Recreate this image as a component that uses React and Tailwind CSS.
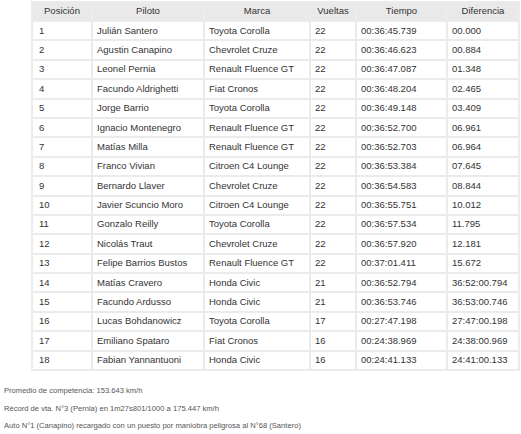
const rows = [
    ["1", "Julián Santero", "Toyota Corolla", "22", "00:36:45.739", "00.000"],
    ["2", "Agustin Canapino", "Chevrolet Cruze", "22", "00:36:46.623", "00.884"],
    ["3", "Leonel Pernia", "Renault Fluence GT", "22", "00:36:47.087", "01.348"],
    ["4", "Facundo Aldrighetti", "Fiat Cronos", "22", "00:36:48.204", "02.465"],
    ["5", "Jorge Barrio", "Toyota Corolla", "22", "00:36:49.148", "03.409"],
    ["6", "Ignacio Montenegro", "Renault Fluence GT", "22", "00:36:52.700", "06.961"],
    ["7", "Matías Milla", "Renault Fluence GT", "22", "00:36:52.703", "06.964"],
    ["8", "Franco Vivian", "Citroen C4 Lounge", "22", "00:36:53.384", "07.645"],
    ["9", "Bernardo Llaver", "Chevrolet Cruze", "22", "00:36:54.583", "08.844"],
    ["10", "Javier Scuncio Moro", "Citroen C4 Lounge", "22", "00:36:55.751", "10.012"],
    ["11", "Gonzalo Reilly", "Toyota Corolla", "22", "00:36:57.534", "11.795"],
    ["12", "Nicolás Traut", "Chevrolet Cruze", "22", "00:36:57.920", "12.181"],
    ["13", "Felipe Barrios Bustos", "Renault Fluence GT", "22", "00:37:01.411", "15.672"],
    ["14", "Matías Cravero", "Honda Civic", "21", "00:36:52.794", "36:52:00.794"],
    ["15", "Facundo Ardusso", "Honda Civic", "21", "00:36:53.746", "36:53:00.746"],
    ["16", "Lucas Bohdanowicz", "Toyota Corolla", "17", "00:27:47.198", "27:47:00.198"],
    ["17", "Emiliano Spataro", "Fiat Cronos", "16", "00:24:38.969", "24:38:00.969"],
    ["18", "Fabian Yannantuoni", "Honda Civic", "16", "00:24:41.133", "24:41:00.133"],
];

const App = () => {
    return (
        <div className="w-[521px] h-[434px] bg-white overflow-hidden font-['Liberation_Sans',Arial,sans-serif] text-[#333]">
            {/* Results table */}
            <div className="pt-[1px] pl-[31px]">
                <table className="table-fixed w-[489px] border-separate border-spacing-[2px] bg-[#ebebeb] text-[9.5px]">
                    <thead>
                        <tr>
                            <th className="w-[58px] h-[17px] p-0 font-normal text-center bg-[#e9e9e9]">Posición</th>
                            <th className="w-[110px] p-0 font-normal text-center bg-[#e9e9e9]">Piloto</th>
                            <th className="w-[104px] p-0 font-normal text-center bg-[#e9e9e9]">Marca</th>
                            <th className="w-[44px] p-0 font-normal text-center bg-[#e9e9e9]">Vueltas</th>
                            <th className="w-[89px] p-0 font-normal text-center bg-[#e9e9e9]">Tiempo</th>
                            <th className="w-[70px] p-0 font-normal text-center bg-[#e9e9e9]">Diferencia</th>
                        </tr>
                    </thead>
                    <tbody>
                        {rows.map((r) => (
                            <tr key={r[0]}>
                                <td className="h-[17.4px] p-0 pl-[6px] bg-white">{r[0]}</td>
                                <td className="p-0 pl-[4px] bg-white">{r[1]}</td>
                                <td className="p-0 pl-[4px] bg-white">{r[2]}</td>
                                <td className="p-0 pl-[4px] bg-white">{r[3]}</td>
                                <td className="p-0 pl-[4px] bg-white">{r[4]}</td>
                                <td className="p-0 pl-[4px] bg-white">{r[5]}</td>
                            </tr>
                        ))}
                    </tbody>
                </table>
            </div>

            {/* Notes */}
            <div className="mt-[11px] pl-[4px] text-[7.6px] leading-[17.5px] text-[#555]">
                <p>Promedio de competencia: 153.643 km/h</p>
                <p>Récord de vta. N°3 (Pernia) en 1m27s801/1000 a 175.447 km/h</p>
                <p>Auto N°1 (Canapino) recargado con un puesto por maniobra peligrosa al N°68 (Santero)</p>
            </div>
        </div>
    );
};

export default App;
